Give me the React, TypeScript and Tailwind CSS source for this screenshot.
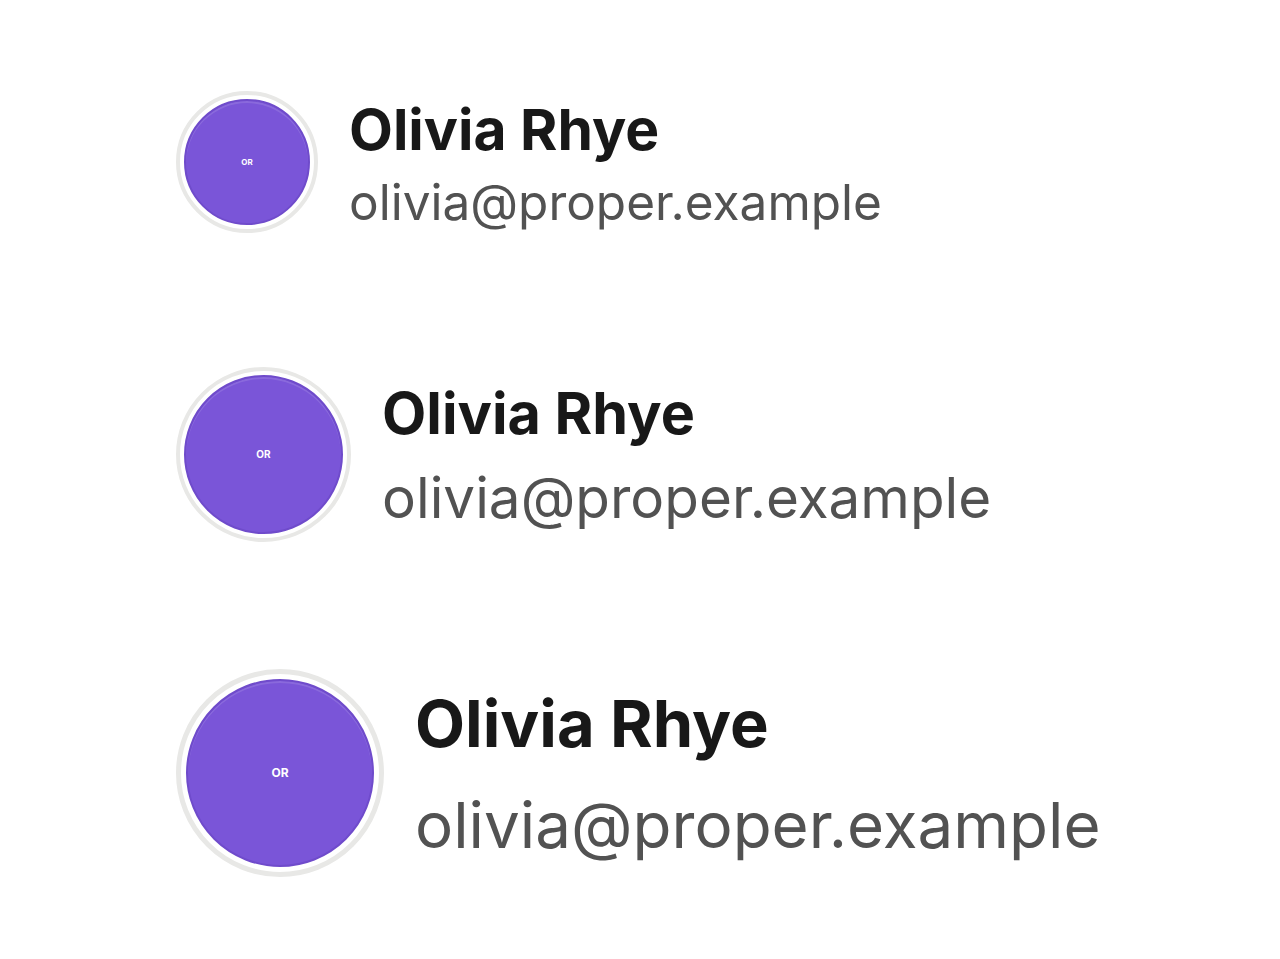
const rows = [
  {
    outer: "w-[142px] h-[142px] border-[4px] p-[4px]",
    initials: "text-[8px]",
    name: "text-[57px] leading-[82px]",
    email: "text-[49.5px] leading-[63px]",
    gap: "gap-[31px]",
    wrap: "mt-[89px]",
  },
  {
    outer: "w-[175px] h-[175px] border-[4px] p-[4px]",
    initials: "text-[10px]",
    name: "text-[57.5px] leading-[85px]",
    email: "text-[56.6px] leading-[83px]",
    gap: "gap-[31px]",
    wrap: "mt-[133px]",
  },
  {
    outer: "w-[208px] h-[208px] border-[5px] p-[5px]",
    initials: "text-[12px]",
    name: "text-[65px] leading-[102px]",
    email: "text-[63.7px] leading-[99px]",
    gap: "gap-[31px]",
    wrap: "mt-[127px]",
  },
];

export default function App() {
  return (
    <div
      className="min-h-[959px] bg-white pl-[176px]"
      style={{ fontFamily: "Inter, 'Noto Sans', sans-serif" }}
    >
      <div className="flex flex-col">
        {rows.map((r, i) => (
          <div key={i} className={`flex items-center ${r.gap} ${r.wrap}`}>
            {/* avatar */}
            <div className={`shrink-0 rounded-full border-[#e8e8e6] bg-white ${r.outer}`}>
              <div className="w-full h-full rounded-full bg-[#7a55d8] border-2 border-[#6f4bcb] shadow-[inset_0_2px_0_rgba(255,255,255,0.12)] flex items-center justify-center">
                <span className={`font-bold text-white ${r.initials}`}>OR</span>
              </div>
            </div>
            <div className="flex flex-col">
              <div className={`font-bold text-[#181818] ${r.name}`}>Olivia Rhye</div>
              <div className={`text-[#525252] ${r.email}`}>olivia@proper.example</div>
            </div>
          </div>
        ))}
      </div>
    </div>
  );
}
